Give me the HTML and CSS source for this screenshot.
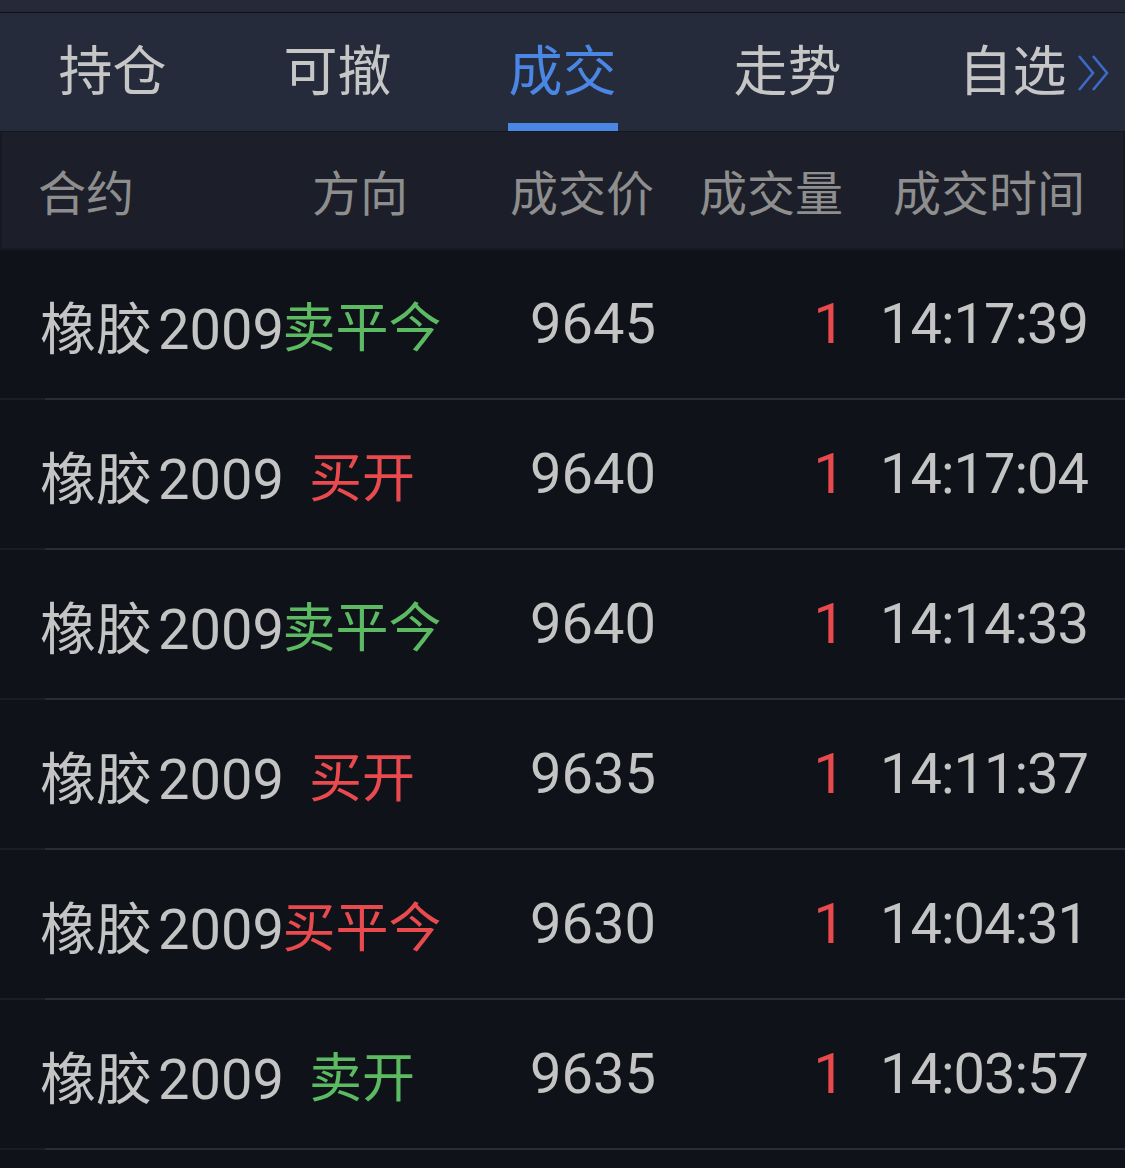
FILE: index.html
```html
<!DOCTYPE html>
<html lang="zh-CN">
<head>
    <meta charset="UTF-8">
    <meta name="viewport" content="width=device-width, initial-scale=1.0">
    <title>成交</title>
    <link rel="stylesheet" href="styles.css">
</head>
<body>
    <div class="topbar"></div>
    <nav class="tabs">
        <div class="tab">持仓</div>
        <div class="tab">可撤</div>
        <div class="tab active">成交</div>
        <div class="tab">走势</div>
        <div class="tab">自选
            <svg class="more" width="34" height="38" viewBox="0 0 34 38">
                <path d="M2 2 L16 19 L2 36 M16 2 L30 19 L16 36" fill="none" stroke="#3d69c8" stroke-width="2.6"/>
            </svg>
        </div>
    </nav>
    <div class="grid head">
        <div>合约</div>
        <div class="center">方向</div>
        <div class="right">成交价</div>
        <div class="right">成交量</div>
        <div class="right">成交时间</div>
    </div>
    <div class="list">
        <div class="grid row">
            <div>橡胶<span class="num">2009</span></div>
            <div class="center dir green">卖平今</div>
            <div class="right">9645</div>
            <div class="right red">1</div>
            <div class="right time">14:17:39</div>
        </div>
        <div class="grid row">
            <div>橡胶<span class="num">2009</span></div>
            <div class="center dir red">买开</div>
            <div class="right">9640</div>
            <div class="right red">1</div>
            <div class="right time">14:17:04</div>
        </div>
        <div class="grid row">
            <div>橡胶<span class="num">2009</span></div>
            <div class="center dir green">卖平今</div>
            <div class="right">9640</div>
            <div class="right red">1</div>
            <div class="right time">14:14:33</div>
        </div>
        <div class="grid row">
            <div>橡胶<span class="num">2009</span></div>
            <div class="center dir red">买开</div>
            <div class="right">9635</div>
            <div class="right red">1</div>
            <div class="right time">14:11:37</div>
        </div>
        <div class="grid row">
            <div>橡胶<span class="num">2009</span></div>
            <div class="center dir red">买平今</div>
            <div class="right">9630</div>
            <div class="right red">1</div>
            <div class="right time">14:04:31</div>
        </div>
        <div class="grid row">
            <div>橡胶<span class="num">2009</span></div>
            <div class="center dir green">卖开</div>
            <div class="right">9635</div>
            <div class="right red">1</div>
            <div class="right time">14:03:57</div>
        </div>
    </div>
</body>
</html>
```
FILE: styles.css
```css
/* Reset */
* {
  box-sizing: border-box;
  margin: 0;
  padding: 0;
}

body {
  font-family: Roboto, "Noto Sans CJK SC", sans-serif;
  background-color: #0f1219;
  color: #c4c4c4;
  overflow: hidden;
}

.topbar {
  height: 13px;
  background-color: #252a38;
  border-bottom: 1px solid #0d1016;
}

/* Tab bar */
.tabs {
  display: flex;
  height: 119px;
  background-color: #252b3a;
  border-bottom: 1px solid #15181f;
}

.tab {
  flex: 1;
  position: relative;
  text-align: center;
  font-size: 54px;
  line-height: 120px;
  color: #c6c6c6;
}

.tab.active {
  color: #4a86e3;
}

.tab.active::after {
  content: "";
  position: absolute;
  left: 50%;
  bottom: 0;
  width: 110px;
  height: 8px;
  margin-left: -55px;
  background-color: #4a86e3;
}

.tab .more {
  position: absolute;
  right: 14px;
  top: 41px;
}

/* Table */
.grid {
  display: grid;
  grid-template-columns: 232px 180px 204px 189px 1fr;
  align-items: center;
  padding: 0 37px 0 40px;
  white-space: nowrap;
}

.head {
  height: 118px;
  font-size: 48px;
  color: #8e8e8e;
  background-color: #1c1f29;
  border: 2px solid #161922;
  border-top: none;
  padding-left: 36px;
  padding-right: 38px;
}

.row {
  height: 150px;
  font-size: 56px;
  padding-bottom: 2px;
  background: linear-gradient(#292d38, #292d38) 45px 100% / calc(100% - 45px) 2px no-repeat,
              linear-gradient(#1a1d25, #1a1d25) 0 100% / 100% 2px no-repeat,
              #0f1219;
}

.row .num {
  margin-left: 6px;
}

.row .dir {
  font-size: 53px;
}

.row .time {
  letter-spacing: -1px;
}

.center {
  text-align: center;
}

.right {
  text-align: right;
}

.green {
  color: #5cbb62;
}

.red {
  color: #e84a4e;
}
```
